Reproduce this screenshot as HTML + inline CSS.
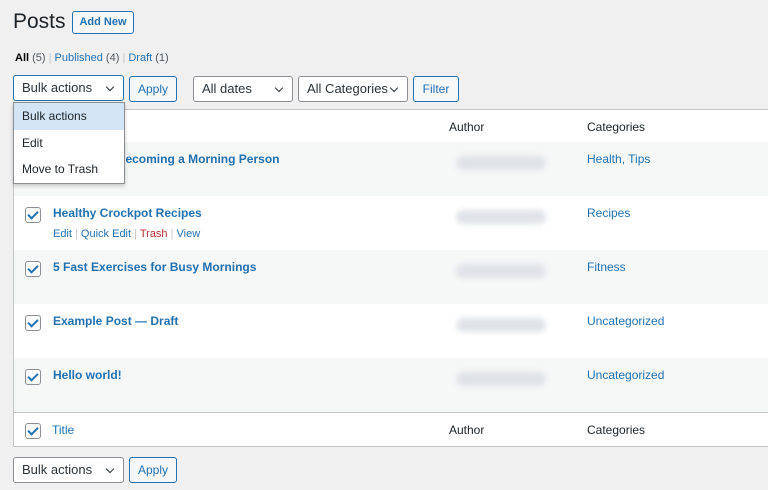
<html><head><style>
body{margin:0;width:768px;height:490px;background:#f0f0f1;font-family:"Liberation Sans",sans-serif;font-size:12px;color:#1d2327;position:relative;overflow:hidden}
.a{position:absolute}
a{color:#2271b1;text-decoration:none}
.sel{position:absolute;height:26px;border:1px solid #8c8f94;border-radius:3px;background:#fff;box-sizing:border-box;font-size:13px;line-height:24px;padding-left:8px;color:#2c3338}
.sel:after{content:"";position:absolute;right:10px;top:8px;width:5px;height:5px;border-right:1.5px solid #2c3338;border-bottom:1.5px solid #2c3338;transform:rotate(45deg)}
.btn{position:absolute;height:26px;border:1px solid #2271b1;border-radius:3px;background:#f6f7f7;box-sizing:border-box;color:#2271b1;font-size:12px;line-height:24px;text-align:center}
.row{position:absolute;left:13px;right:0;border-left:1px solid #c3c4c7}
.cb{position:absolute;left:11px;width:14px;height:14px;border:1px solid #8c8f94;border-radius:3px;background:#fff}
.cb:after{content:"";position:absolute;left:4px;top:1px;width:4px;height:8px;border-right:2px solid #2271b1;border-bottom:2px solid #2271b1;transform:rotate(45deg)}
.t{position:absolute;left:39px;font-weight:bold;color:#2271b1;font-size:12px}
.au{position:absolute;left:442px;width:90px;height:14px;background:#dfe3e8;border-radius:7px;filter:blur(3px)}
.c{position:absolute;left:573px;color:#2271b1;font-size:12px}
</style></head><body>
<div class="a" style="left:13px;top:10px;font-size:21px;color:#1d2327">Posts</div>
<div class="btn" style="left:72px;top:11px;width:62px;height:23px;line-height:21px;font-weight:bold;font-size:11px">Add New</div>
<div class="a" style="left:15px;top:52px;font-size:11px;color:#50575e"><b style="color:#000">All</b> (5) <span style="color:#c3c4c7">|</span> <a>Published</a> (4) <span style="color:#c3c4c7">|</span> <a>Draft</a> (1)</div>
<div class="sel" style="left:13px;top:75px;width:111px;border-color:#2271b1">Bulk actions</div>
<div class="btn" style="left:129px;top:76px;width:48px">Apply</div>
<div class="sel" style="left:193px;top:76px;width:100px">All dates</div>
<div class="sel" style="left:298px;top:76px;width:110px">All Categories</div>
<div class="btn" style="left:413px;top:76px;width:46px">Filter</div>
<div class="row" style="top:109px;height:32px;background:#fff;border-top:1px solid #c3c4c7;border-bottom:1px solid #c3c4c7">
<span class="a" style="left:435px;top:10px">Author</span><span class="a" style="left:573px;top:10px">Categories</span></div>
<div class="row" style="top:142px;height:54px;background:#f6f7f7"><span class="t" style="top:10px">10 Tips for Becoming a Morning Person</span><div class="au" style="top:14px"></div><span class="c" style="top:10px">Health, Tips</span></div>
<div class="row" style="top:196px;height:54px;background:#fff"><div class="cb" style="top:11px"></div><span class="t" style="top:10px">Healthy Crockpot Recipes</span><span class="a" style="left:39px;top:32px;font-size:11px;color:#2271b1">Edit <span style="color:#c3c4c7">|</span> Quick Edit <span style="color:#c3c4c7">|</span> <span style="color:#b32d2e">Trash</span> <span style="color:#c3c4c7">|</span> View</span><div class="au" style="top:14px"></div><span class="c" style="top:10px">Recipes</span></div>
<div class="row" style="top:250px;height:54px;background:#f6f7f7"><div class="cb" style="top:11px"></div><span class="t" style="top:10px">5 Fast Exercises for Busy Mornings</span><div class="au" style="top:14px"></div><span class="c" style="top:10px">Fitness</span></div>
<div class="row" style="top:304px;height:54px;background:#fff"><div class="cb" style="top:11px"></div><span class="t" style="top:10px">Example Post — Draft</span><div class="au" style="top:14px"></div><span class="c" style="top:10px">Uncategorized</span></div>
<div class="row" style="top:358px;height:54px;background:#f6f7f7"><div class="cb" style="top:11px"></div><span class="t" style="top:10px">Hello world!</span><div class="au" style="top:14px"></div><span class="c" style="top:10px">Uncategorized</span></div>
<div class="row" style="top:412px;height:33px;background:#fff;border-top:1px solid #c3c4c7;border-bottom:1px solid #c3c4c7"><div class="cb" style="top:10px"></div><span class="a" style="left:38px;top:10px;color:#2271b1">Title</span><span class="a" style="left:435px;top:10px">Author</span><span class="a" style="left:573px;top:10px">Categories</span></div>
<div class="sel" style="left:13px;top:457px;width:111px">Bulk actions</div>
<div class="btn" style="left:129px;top:457px;width:48px">Apply</div>
<div class="a" style="left:13px;top:102px;width:110px;height:80px;background:#fff;border:1px solid #8c8f94;box-shadow:0 2px 4px rgba(0,0,0,.2);font-size:12px">
<div style="background:#d3e5f5;height:27px;line-height:27px;padding-left:8px">Bulk actions</div>
<div style="height:26px;line-height:26px;padding-left:8px">Edit</div>
<div style="height:26px;line-height:26px;padding-left:8px">Move to Trash</div></div>
</body></html>
